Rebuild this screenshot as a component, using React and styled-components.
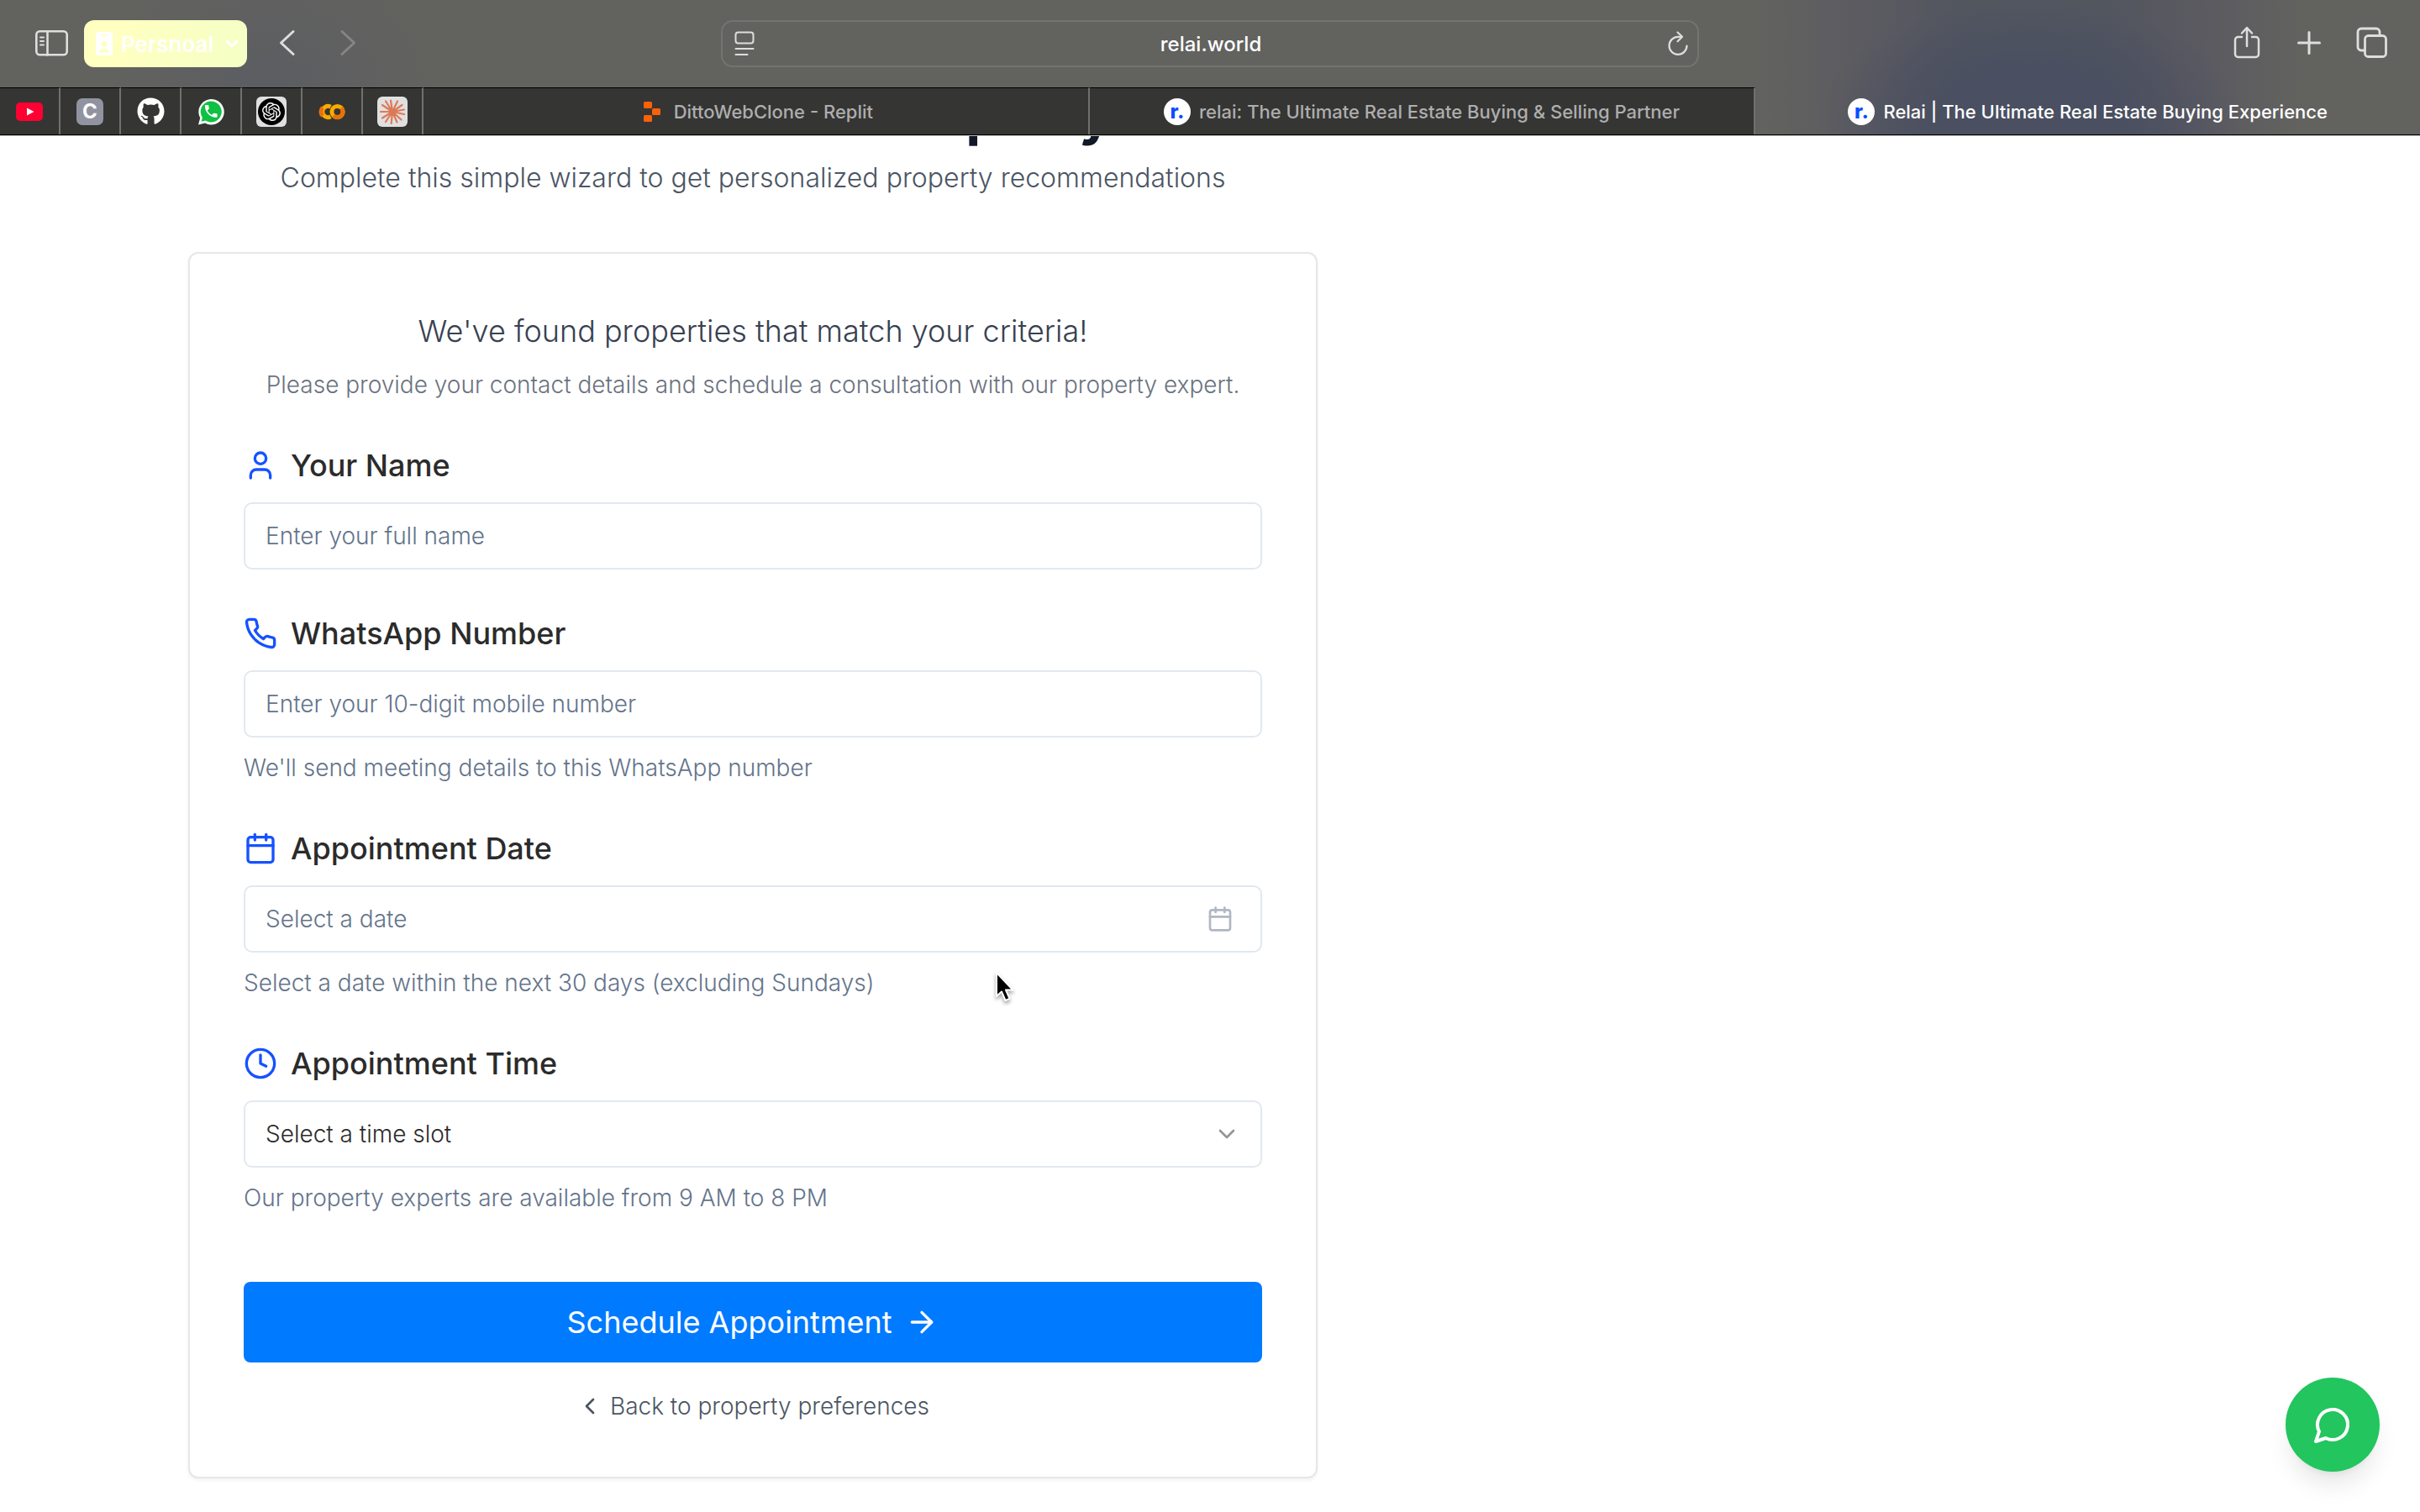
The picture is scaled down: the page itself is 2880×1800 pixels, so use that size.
import React from "react";
import styled, { createGlobalStyle, css } from "styled-components";
import { ArrowRight, Calendar, ChevronDown, ChevronLeft, Clock, User } from "lucide-react";
import { FaGithub } from "react-icons/fa";
import { SiOpenai } from "react-icons/si";

const GlobalStyle = createGlobalStyle`
  *, *::before, *::after { box-sizing: border-box; }
  body {
    margin: 0;
    background: #ffffff;
    font-family: Inter, "Liberation Sans", sans-serif;
    font-weight: 300;
  }
  h1, h2, p { margin: 0; }
  button, input, select { font: inherit; color: inherit; }
  button { cursor: pointer; }
  svg { display: block; flex: none; }
`;

/* ---------- browser chrome ---------- */

const Chrome = styled.header`
  position: relative;
  z-index: 2;
  background:
    radial-gradient(ellipse 250px 140px at 83.9% 140px, #4a4f61 0%, #4a4f61 40%, transparent 100%),
    linear-gradient(to right, transparent 73%, #5b5a61 77.5%, #52565f 81%, #52565f 87%, #5b5a61 91%, transparent 95%),
    radial-gradient(ellipse 190px 160px at 320px 110px, #5c5d62 0%, transparent 100%),
    #62625f;
  color: #dededd;
  border-bottom: 1px solid #000000;
  box-shadow: 0 1px 0 #b9b9b6;
`;

const Toolbar = styled.div`
  display: grid;
  grid-template-columns: 1fr minmax(0, 1164px) 1fr;
  align-items: center;
  height: 104px;
  padding: 0 40px;
`;

const ToolGroup = styled.div`
  display: flex;
  align-items: center;
  gap: ${(p) => p.$gap}px;
  justify-content: ${(p) => (p.$end ? "flex-end" : "flex-start")};
`;

const IconButton = styled.button`
  display: flex;
  padding: 0;
  border: 0;
  background: none;
  color: #dededd;
  &:disabled { color: #858583; }
`;

const ProfileButton = styled.button`
  display: flex;
  align-items: center;
  height: 56px;
  margin-right: 20px;
  padding: 0 10px 0 14px;
  gap: 10px;
  border: 0;
  border-radius: 12px;
  background: linear-gradient(100deg, #ffffc1 20%, #f5ffc5 100%);
  color: #ffffff;
  font-size: 26px;
  font-weight: 600;
  svg:last-child { margin-left: 4px; }
`;

const AddressBar = styled.div`
  display: flex;
  align-items: center;
  height: 56px;
  padding: 0 10px 0 14px;
  border: 2px solid #737371;
  border-radius: 14px;
`;

const AddressInput = styled.input`
  flex: 1;
  min-width: 0;
  padding: 0;
  border: 0;
  outline: 0;
  background: none;
  color: #ffffff;
  font-size: 24px;
  font-weight: 500;
  text-align: center;
`;

const TabBar = styled.nav`
  display: flex;
  height: 56px;
`;

const tabBase = css`
  display: flex;
  align-items: center;
  justify-content: center;
  text-decoration: none;
  border-top: 1px solid #000000;
  border-right: 2px solid #70706e;
  background: #353534;
`;

const PinnedTab = styled.a`
  ${tabBase}
  width: 72px;
  flex: none;
`;

const Tab = styled.a`
  ${tabBase}
  flex: 1;
  min-width: 0;
  gap: 10px;
  color: #aeaead;
  font-size: 22px;
  font-weight: 500;
  white-space: nowrap;
  ${(p) =>
    p.$active &&
    css`
      background: none;
      border-color: transparent;
      border-right: 0;
      color: #ffffff;
    `}
`;

const RelaiMark = styled.span`
  display: flex;
  align-items: center;
  justify-content: center;
  width: 32px;
  height: 32px;
  border-radius: 50%;
  background: #ffffff;
  color: #0a4dff;
  font-size: 24px;
  line-height: 24px;
  font-weight: 800;
`;

const LetterMark = styled.span`
  display: flex;
  align-items: center;
  justify-content: center;
  width: 32px;
  height: 32px;
  border-radius: 7px;
  background: #9293a1;
  color: #ffffff;
  font-size: 24px;
  font-weight: 700;
`;

const Tile = styled.span`
  display: flex;
  align-items: center;
  justify-content: center;
  width: 36px;
  height: 36px;
  border-radius: 6px;
  background: #e0e0e0;
`;

const BlackDisc = styled.span`
  display: flex;
  align-items: center;
  justify-content: center;
  width: 32px;
  height: 32px;
  border-radius: 50%;
  background: #000000;
  color: #ffffff;
`;

/* ---------- page ---------- */

const Page = styled.main`
  display: grid;
  grid-template-columns: minmax(0, 1792px) 1fr;
  overflow: clip;
`;

const Column = styled.div`
  display: flex;
  flex-direction: column;
  align-items: center;
  padding: 0 24px 40px;
`;

/* The page is scrolled: the title sits mostly behind the browser chrome. */
const PageTitle = styled.h1`
  margin-top: -61px;
  color: #111827;
  font-size: 66px;
  line-height: 72px;
  font-weight: 700;
`;

const PageLead = styled.p`
  margin: 16px 0 64px;
  color: #4b5563;
  font-size: 32px;
  line-height: 48px;
`;

const Card = styled.form`
  display: flex;
  flex-direction: column;
  gap: 56px;
  width: 100%;
  max-width: 1344px;
  padding: 64px;
  border: 2px solid #e5e7eb;
  border-radius: 12px;
  background: #ffffff;
  box-shadow: 0 2px 4px rgba(0, 0, 0, 0.06);
`;

const CardHeader = styled.div`
  display: flex;
  flex-direction: column;
  gap: 16px;
  text-align: center;
`;

const CardTitle = styled.h2`
  color: #374151;
  font-size: 36px;
  line-height: 56px;
  font-weight: 300;
`;

const CardText = styled.p`
  color: #6b7280;
  font-size: 28px;
  line-height: 40px;
`;

const FieldBlock = styled.div`
  display: flex;
  flex-direction: column;
`;

const FieldLabel = styled.label`
  display: flex;
  align-items: center;
  gap: 16px;
  margin-bottom: 24px;
  color: #2b2b2b;
  font-size: 36px;
  line-height: 40px;
  font-weight: 500;
  svg { color: #1652ff; }
`;

const Control = styled.div`
  display: flex;
  align-items: center;
  height: 80px;
  padding: 0 ${(p) => (p.$inset ? 32 : 24)}px 0 24px;
  border: 2px solid #e2e8f0;
  border-radius: 10px;
  background: #ffffff;
  color: ${(p) => p.$iconColor || "inherit"};
`;

const TextInput = styled.input`
  flex: 1;
  min-width: 0;
  height: 100%;
  padding: 0;
  border: 0;
  outline: 0;
  background: none;
  color: #2b2b2b;
  font-size: 28px;
  &::placeholder { color: #64748b; opacity: 1; }
`;

const SelectInput = styled.select`
  flex: 1;
  min-width: 0;
  height: 100%;
  padding: 0;
  border: 0;
  outline: 0;
  appearance: none;
  background: none;
  color: #2b2b2b;
  font-size: 28px;
`;

const Hint = styled.p`
  margin-top: 16px;
  color: #64748b;
  font-size: 28px;
  line-height: 40px;
`;

const Actions = styled.div`
  display: flex;
  flex-direction: column;
  align-items: center;
  gap: 32px;
  margin-top: 24px;
`;

const SubmitButton = styled.button`
  display: flex;
  align-items: center;
  justify-content: center;
  gap: 16px;
  width: 100%;
  height: 96px;
  border: 0;
  border-radius: 8px;
  background: #007aff;
  color: #ffffff;
  font-size: 36px;
  font-weight: 400;
`;

const BackButton = styled.button`
  display: flex;
  align-items: center;
  gap: 8px;
  padding: 0;
  border: 0;
  background: none;
  color: #4b5563;
  font-size: 28px;
  line-height: 40px;
`;

const ChatButton = styled.button`
  position: fixed;
  right: 48px;
  bottom: 48px;
  display: flex;
  align-items: center;
  justify-content: center;
  width: 112px;
  height: 112px;
  padding: 0;
  border: 0;
  border-radius: 50%;
  background: #22c55e;
  color: #ffffff;
  box-shadow: 0 20px 30px -6px rgba(0, 0, 0, 0.1), 0 8px 12px -8px rgba(0, 0, 0, 0.1);
`;

const Pointer = styled.svg`
  position: fixed;
  left: 1182px;
  top: 1154px;
  filter: drop-shadow(0 3px 2px rgba(0, 0, 0, 0.35));
  pointer-events: none;
`;

/* ---------- drawings ---------- */

const line = { fill: "none", stroke: "currentColor", strokeLinecap: "round", strokeLinejoin: "round" };

const SidebarIcon = () => (
  <svg width="44" height="36" viewBox="0 0 44 36" {...line} strokeWidth="2.6">
    <rect x="3.3" y="3.3" width="36.4" height="28" rx="4" />
    <path d="M16.5 3.5v28" />
    <path d="M8 10.5h4M8 15h4M8 19.5h4" strokeWidth="2" />
  </svg>
);
const BadgeIcon = () => (
  <svg width="20" height="28" viewBox="0 0 20 28">
    <rect width="20" height="28" rx="3" fill="#fff" />
    <path d="M6 4h8" stroke="#fdffc3" strokeWidth="1.4" strokeLinecap="round" />
    <circle cx="10" cy="14.5" r="3.4" fill="#fdffc3" />
    <path d="M4 24.5c.6-3.4 3-4.8 6-4.8s5.4 1.4 6 4.8z" fill="#fdffc3" />
  </svg>
);
const SmallChevron = () => (
  <svg width="16" height="12" viewBox="0 0 16 12" {...line} strokeWidth="3.2">
    <path d="M2.500 3.500l5.500 5 5.500-5" />
  </svg>
);
const NavChevron = ({ flip }) => (
  <svg width="24" height="36" viewBox="0 0 24 36" {...line} strokeWidth="3">
    <path d={flip ? "M5 3.500l14.500 13.500L5 30.500" : "M19 3.500L4.500 17 19 30.500"} />
  </svg>
);
const ReaderIcon = () => (
  <svg width="24" height="32" viewBox="0 0 24 32" {...line} strokeWidth="2">
    <rect x="1.5" y="2.5" width="21" height="13" rx="3" />
    <path d="M1.500 22h21M1.500 29h14" />
  </svg>
);
const ReloadIcon = () => (
  <svg width="26" height="32" viewBox="0 0 26 32" {...line} strokeWidth="2.2">
    <path d="M23.500 18.500a10.500 10.500 0 1 1-10.500-10.700h4" />
    <path d="M12.500 2.500l5.500 5.300-5.500 5.500" />
  </svg>
);
const ShareIcon = () => (
  <svg width="36" height="44" viewBox="0 0 36 44" {...line} strokeWidth="2.5">
    <path d="M12 14H7.500a3.500 3.500 0 0 0-3.500 3.500v17A3.500 3.500 0 0 0 7.500 38h21a3.500 3.500 0 0 0 3.500-3.500v-17a3.500 3.500 0 0 0-3.500-3.500H24" />
    <path d="M18 25V3.500M12 9.500l6-6.500 6 6.500" />
  </svg>
);
const PlusIcon = () => (
  <svg width="32" height="32" viewBox="0 0 32 32" {...line} strokeWidth="3">
    <path d="M16 2.500v25M3.500 15h25" />
  </svg>
);
const TabsIcon = () => (
  <svg width="36" height="40" viewBox="1 0 36 40" overflow="visible" {...line} strokeWidth="2.8">
    <rect x="11.5" y="10.5" width="25" height="25" rx="4" />
    <path d="M10.500 28H7a4 4 0 0 1-4-4V6a4 4 0 0 1 4-4h18a4 4 0 0 1 4 4v3.500" />
  </svg>
);
const YouTubeMark = () => (
  <svg width="32" height="22" viewBox="0 0 32 22">
    <rect width="32" height="22" rx="5" fill="#ff0033" />
    <path d="M13 6.500l8.500 4.500-8.500 4.500z" fill="#fff" />
  </svg>
);
const WhatsAppMark = () => (
  <svg width="32" height="32" viewBox="0 0 32 32">
    <path d="M1 31.500l2.200-8A15.200 15.200 0 1 1 9 29.400z" fill="#fff" />
    <path d="M4.600 27.800l1.300-4.800A12.500 12.500 0 1 1 9.500 26.500z" fill="#0fc143" />
    <path
      transform="translate(6.4 5.6) scale(0.82)"
      d="M6.620 10.790c1.440 2.830 3.760 5.140 6.590 6.590l2.200-2.200c.27-.27.67-.36 1.020-.24 1.120.37 2.330.57 3.570.57.55 0 1 .45 1 1V20c0 .55-.45 1-1 1-9.390 0-17-7.610-17-17 0-.55.45-1 1-1h3.500c.55 0 1 .45 1 1 0 1.250.2 2.450.57 3.570.11.35.03.74-.25 1.020l-2.200 2.200z"
      fill="#fff"
    />
  </svg>
);
const ColabMark = () => (
  <svg width="32" height="20" viewBox="0 0 32 20" fill="none" strokeWidth="5">
    <path d="M14.500 4.200A6.600 6.600 0 1 0 14.500 15.800" stroke="#f9ab00" />
    <path d="M4.900 5.300A6.600 6.600 0 0 0 4.900 14.700" stroke="#e8710a" />
    <circle cx="22.5" cy="10" r="6.6" stroke="#f9ab00" />
    <path d="M27.200 5.300A6.600 6.600 0 0 1 17.800 14.700" stroke="#e8710a" />
  </svg>
);
const BurstMark = () => (
  <svg width="32" height="32" viewBox="0 0 32 32" stroke="#dc7a58" strokeWidth="2.2" strokeLinecap="round">
    <path d="M16 16L14 2.500M16 16L22 3.500M16 16L27.500 8M16 16L30 13.500M16 16L30 19M16 16L26.500 25.500M16 16L21.500 28.500M16 16L14.700 30M16 16L8 28M16 16L4 23.500M16 16L2 16M16 16L4 8M16 16L8 3.500" />
    <circle cx="16" cy="16" r="3" fill="#dc7a58" />
  </svg>
);
const ReplitMark = () => (
  <svg width="32" height="24" viewBox="0 0 32 24" fill="#fb6107">
    <rect x="6" y="0" width="10" height="8" rx="1.5" />
    <rect x="16" y="8" width="10" height="8" rx="1.5" />
    <rect x="6" y="16" width="10" height="8" rx="1.5" />
  </svg>
);
const PhoneIcon = () => (
  <svg width="40" height="40" viewBox="0 0 24 24" {...line} strokeWidth="2">
    <path d="M22 16.920v3a2 2 0 0 1-2.180 2 19.790 19.790 0 0 1-8.630-3.070 19.500 19.500 0 0 1-6-6 19.790 19.790 0 0 1-3.070-8.670A2 2 0 0 1 4.110 2h3a2 2 0 0 1 2 1.720 12.840 12.840 0 0 0 .7 2.810 2 2 0 0 1-.45 2.110L8.090 9.910a16 16 0 0 0 6 6l1.270-1.270a2 2 0 0 1 2.110-.45 12.840 12.840 0 0 0 2.810.7A2 2 0 0 1 22 16.920z" />
  </svg>
);
const ChatIcon = () => (
  <svg width="48" height="48" viewBox="0 0 24 24" {...line} strokeWidth="2">
    <path d="M7.900 20A9 9 0 1 0 4 16.100L2 22Z" />
  </svg>
);

const PINNED = [
  { name: "YouTube", icon: <YouTubeMark /> },
  { name: "C", icon: <LetterMark>C</LetterMark> },
  { name: "GitHub", icon: <FaGithub size={33} color="#fff" /> },
  { name: "WhatsApp", icon: <WhatsAppMark /> },
  { name: "ChatGPT", icon: <Tile><BlackDisc><SiOpenai size={22} /></BlackDisc></Tile> },
  { name: "Colab", icon: <ColabMark /> },
  { name: "Claude", icon: <Tile><BurstMark /></Tile> },
];

const TABS = [
  { title: "DittoWebClone - Replit", icon: <ReplitMark /> },
  { title: "relai: The Ultimate Real Estate Buying & Selling Partner", icon: <RelaiMark>r.</RelaiMark> },
  { title: "Relai | The Ultimate Real Estate Buying Experience", icon: <RelaiMark>r.</RelaiMark>, active: true },
];

function BrowserChrome() {
  return (
    <Chrome>
      <Toolbar>
        <ToolGroup $gap={16}>
          <IconButton aria-label="Sidebar"><SidebarIcon /></IconButton>
          <ProfileButton>
            <BadgeIcon />
            Persnoal
            <SmallChevron />
          </ProfileButton>
          <ToolGroup $gap={48}>
            <IconButton aria-label="Back"><NavChevron /></IconButton>
            <IconButton aria-label="Forward" disabled><NavChevron flip /></IconButton>
          </ToolGroup>
        </ToolGroup>
        <AddressBar>
          <IconButton aria-label="Reader"><ReaderIcon /></IconButton>
          <AddressInput aria-label="Address" defaultValue="relai.world" />
          <IconButton aria-label="Reload"><ReloadIcon /></IconButton>
        </AddressBar>
        <ToolGroup $gap={40} $end>
          <IconButton aria-label="Share"><ShareIcon /></IconButton>
          <IconButton aria-label="New tab"><PlusIcon /></IconButton>
          <IconButton aria-label="Tab overview"><TabsIcon /></IconButton>
        </ToolGroup>
      </Toolbar>
      <TabBar>
        {PINNED.map((t) => (
          <PinnedTab key={t.name} href="#" aria-label={t.name}>{t.icon}</PinnedTab>
        ))}
        {TABS.map((t) => (
          <Tab key={t.title} href="#" $active={t.active}>
            {t.icon}
            <span>{t.title}</span>
          </Tab>
        ))}
      </TabBar>
    </Chrome>
  );
}

function Field({ id, icon, label, hint, children }) {
  return (
    <FieldBlock>
      <FieldLabel htmlFor={id}>
        {icon}
        {label}
      </FieldLabel>
      {children}
      {hint && <Hint>{hint}</Hint>}
    </FieldBlock>
  );
}

export default function App() {
  return (
    <>
      <GlobalStyle />
      <BrowserChrome />
      <Page>
        <Column>
          <PageTitle>Find Your Perfect Property</PageTitle>
          <PageLead>Complete this simple wizard to get personalized property recommendations</PageLead>
          <Card onSubmit={(e) => e.preventDefault()}>
            <CardHeader>
              <CardTitle>We've found properties that match your criteria!</CardTitle>
              <CardText>
                Please provide your contact details and schedule a consultation with our property expert.
              </CardText>
            </CardHeader>
            <Field id="name" icon={<User size={40} />} label="Your Name">
              <Control>
                <TextInput id="name" placeholder="Enter your full name" />
              </Control>
            </Field>
            <Field
              id="phone"
              icon={<PhoneIcon />}
              label="WhatsApp Number"
              hint="We'll send meeting details to this WhatsApp number"
            >
              <Control>
                <TextInput id="phone" type="tel" placeholder="Enter your 10-digit mobile number" />
              </Control>
            </Field>
            <Field
              id="date"
              icon={<Calendar size={40} />}
              label="Appointment Date"
              hint="Select a date within the next 30 days (excluding Sundays)"
            >
              <Control $inset $iconColor="#b0b7c3">
                <TextInput id="date" placeholder="Select a date" />
                <Calendar size={32} />
              </Control>
            </Field>
            <Field
              id="time"
              icon={<Clock size={40} />}
              label="Appointment Time"
              hint="Our property experts are available from 9 AM to 8 PM"
            >
              <Control $iconColor="#959595">
                <SelectInput id="time" defaultValue="">
                  <option value="">Select a time slot</option>
                </SelectInput>
                <ChevronDown size={32} />
              </Control>
            </Field>
            <Actions>
              <SubmitButton type="submit">
                Schedule Appointment
                <ArrowRight size={40} />
              </SubmitButton>
              <BackButton type="button">
                <ChevronLeft size={32} />
                Back to property preferences
              </BackButton>
            </Actions>
          </Card>
        </Column>
      </Page>
      <ChatButton aria-label="Chat"><ChatIcon /></ChatButton>
      <Pointer width="28" height="40" viewBox="0 0 28 40" aria-hidden="true">
        <path
          d="M4 4v28l6-5.500 4.500 10.500 5-2.200-4.500-10.300h8.500z"
          fill="#000"
          stroke="#fff"
          strokeWidth="2"
          strokeLinejoin="round"
        />
      </Pointer>
    </>
  );
}
